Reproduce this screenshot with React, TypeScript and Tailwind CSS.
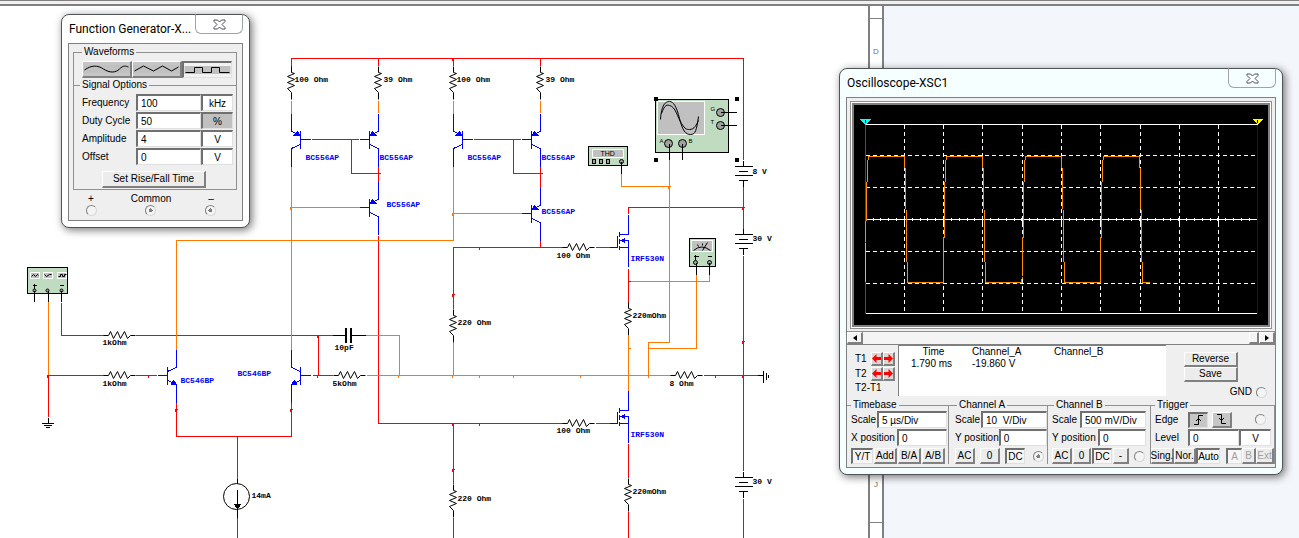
import type { ReactNode } from "react";

const RED = "#ff0000";
const ORANGE = "#ff7800";
const BLUE = "#0000ff";

const redWires =
  "M291 66V58H743V159 M378 58V65 M453 58V65 M540 58V65 " +
  "M311 139H358 M351 139V173H378 M378 166V181 M378 235V423H562 " +
  "M473 139H520 M513 139V173H540 M540 166V187 M540 240V247 " +
  "M453 308V247H562 M595 247H609 M628 213V207H743 M743 186V228 M743 255V470 M743 498V540 " +
  "M628 268V302 M595 423H609 M628 443V477 M628 511V540 M453 423V483 M453 517V540 " +
  "M61 302V335H103 M135 335H332 M318 335V375 M312 375H332 " +
  "M48 375H103 M135 375H156 M48 375V416 M176 402V436H291V402 M237 436V478 M237 517V540 M703 375H757";

const orangeWires =
  "M291 100V113 M378 100V112 M453 100V113 M540 100V112 " +
  "M291 166V349 M291 207H359 M453 166V240H176V349 M453 213H521 " +
  "M621 173V186H669 M669 159V342H648V375 M696 274V348H648 M709 274V281H628 " +
  "M628 335V390 M453 342V375 M366 375H670 M365 335H399V375 M48 301V375";

const redDots = [
  [378, 58], [452, 58], [540, 58], [378, 173], [540, 173], [479, 247], [628, 207], [742, 207],
  [628, 281], [452, 294], [742, 341], [742, 375], [715, 375], [452, 423], [479, 423], [452, 469],
  [317, 335], [317, 375], [148, 375], [47, 375], [175, 409], [290, 409], [237, 436],
];
const orangeDots = [
  [290, 207], [452, 213], [668, 186], [628, 348], [648, 348], [648, 375], [398, 375],
  [452, 375], [479, 375], [513, 375], [580, 375],
];

const labels: [string, number, number][] = [
  ["100 Ohm", 294, 81], ["39 Ohm", 383, 81], ["100 Ohm", 456, 81], ["39 Ohm", 545, 81],
  ["100 Ohm", 556, 257], ["220mOhm", 632, 317], ["220 Ohm", 457, 324], ["100 Ohm", 556, 432],
  ["220mOhm", 632, 493], ["220 Ohm", 457, 500], ["8 Ohm", 669, 385], ["10pF", 334, 349],
  ["5kOhm", 332, 385], ["1kOhm", 102, 344], ["1kOhm", 102, 385], ["14mA", 251, 497],
  ["8 V", 752, 173], ["30 V", 752, 240], ["30 V", 752, 483],
];
const partLabels: [string, number, number][] = [
  ["BC556AP", 305, 159], ["BC556AP", 379, 159], ["BC556AP", 467, 159], ["BC556AP", 541, 159],
  ["BC556AP", 386, 206], ["BC556AP", 541, 213], ["IRF530N", 630, 260], ["IRF530N", 630, 436],
  ["BC546BP", 180, 382], ["BC546BP", 237, 375],
];

function Dots({ points, color }: { points: number[][]; color: string }) {
  return (
    <g stroke={color}>
      {points.map(([x, y]) => (
        <path key={`${x}-${y}`} d={`M${x - 1} ${y}h3M${x} ${y - 1}v3`} />
      ))}
    </g>
  );
}

function Resistor({ x, y, across = false }: { x: number; y: number; across?: boolean }) {
  return (
    <path
      d={
        across
          ? `M${x} ${y}h5l2-4 3 7 4-7 3 7 4-7 3 7 3-3h5`
          : `M${x} ${y}v6l3 1-7 3 7 3-7 3 7 3-7 3 4 4v7`
      }
      stroke="#000"
      shapeRendering="auto"
    />
  );
}

function Transistor({ x, y, flip = false, npn = false }: { x: number; y: number; flip?: boolean; npn?: boolean }) {
  return (
    <g transform={`translate(${x} ${y}) scale(${flip ? -1 : 1} 1)`} stroke={BLUE}>
      <path d="M0-26V-8L9-4M9 5L0 9V27M9-9V9M9 0H19" />
      <path d={npn ? "M0 9l3-4 2 4z" : "M8-4l-6 0 4-4z"} fill={BLUE} />
    </g>
  );
}

function Mosfet({ y }: { y: number }) {
  return (
    <g transform={`translate(628 ${y})`} stroke={BLUE}>
      <path d="M0-33V-13H-9M-9-16V-11M-9-9V-4M-9-2V2M-11-12V0H-19M0 0H-9M0 19V-7H-9" />
      <path d="M-7-7l3-2v4z" fill={BLUE} />
    </g>
  );
}

function Battery({ y }: { y: number }) {
  return <path d={`M743 ${y}v6M734 ${y + 6}h18M738 ${y + 11}h9M734 ${y + 15}h18M738 ${y + 20}h9M743 ${y + 20}v6`} stroke="#000" />;
}

function Instruments() {
  return (
    <g stroke="#000">
      <g fill="#c0dcc0">
        <path d="M655 99h73v53h-73zM588 146h39v19h-39zM689 238h26v28h-26zM27 267h40v26h-40z" />
      </g>
      <g fill="#c0c0c0" stroke="#fff">
        <path d="M657 101h47v33h-47zM592 149h31v8h-31zM691 240h21v11h-21zM30 272h9v6h-9zM43 272h9v6h-9zM57 272h9v6h-9z" />
      </g>
      <g fill="#000" stroke="none">
        <path d="M653 96h4v4h-4zM734 96h4v4h-4zM653 157h4v4h-4zM734 157h4v4h-4z" />
      </g>
      <g shapeRendering="auto">
        <path d="M660 119C661 104 665 101 669 101S676 106 679 118 685 134 690 134 696 130 698 116M661 113C664 104 667 104 669 105 675 106 677 117 681 123S686 129 689 129C694 129 696 124 698 120" />
        <g fill="#a0a0a0">
          <circle cx="720" cy="112" r="4" />
          <circle cx="720" cy="125" r="4" />
          <circle cx="668" cy="143" r="4" />
          <circle cx="682" cy="143" r="4" />
          <circle cx="621" cy="161" r="2" />
          <circle cx="695" cy="262" r="2" />
          <circle cx="709" cy="262" r="2" />
          <circle cx="34" cy="290" r="1.500" />
          <circle cx="47" cy="290" r="1.500" />
          <circle cx="61" cy="290" r="1.500" />
        </g>
        <path d="M693 250q8-7 17 0M702 250l5-8M697 244l1 2M702 243v2" />
        <path d="M31 276l2-2 2 2 2-2 1 1M44 274l2 2 3-2 2 0M58 276h2v-2h2v2h2v-2h2" />
      </g>
      <path d="M720 112h16M720 125h16M669 143v16M682 143v16M621 161v12M696 262v12M709 262v12M34 290v11M48 290v11M61 290v11" />
      <path d="M592 159h3v4h-3zM599 159h3v4h-3zM606 159h3v4h-3z" fill="#a0a0a0" />
      <path d="M693 256h5M695 254v5M707 256h4M32 285h4M34 283v5M59 285h4" />
      <g fill="#000" stroke="none" className="font-['Liberation_Sans',sans-serif] text-[6px]">
        <text x="710" y="110">G</text>
        <text x="710" y="123">T</text>
        <text x="659" y="142">A</text>
        <text x="688" y="142">B</text>
        <text x="600" y="155" className="text-[7px]">THD</text>
      </g>
    </g>
  );
}

function Schematic() {
  return (
    <svg className="block h-full w-full" fill="none" role="img" aria-label="Amplifier schematic">
      <g transform="translate(.5 .5)" shapeRendering="crispEdges">
        <path d={redWires} stroke={RED} />
        <path d={orangeWires} stroke={ORANGE} />
        <Dots points={redDots} color={RED} />
        <Dots points={orangeDots} color={ORANGE} />

        {[291, 378, 453, 540].map((x) => (
          <Resistor key={x} x={x} y={66} />
        ))}
        <Resistor x={628} y={302} />
        <Resistor x={628} y={478} />
        <Resistor x={453} y={309} />
        <Resistor x={453} y={484} />
        <Resistor x={562} y={247} across />
        <Resistor x={562} y={423} across />
        <Resistor x={103} y={335} across />
        <Resistor x={103} y={375} across />
        <Resistor x={333} y={375} across />
        <Resistor x={670} y={375} across />

        <Transistor x={291} y={139} />
        <Transistor x={378} y={139} flip />
        <Transistor x={453} y={139} />
        <Transistor x={540} y={139} flip />
        <Transistor x={378} y={207} flip />
        <Transistor x={540} y={213} flip />
        <Transistor x={176} y={375} flip npn />
        <Transistor x={291} y={375} npn />
        <Mosfet y={247} />
        <Mosfet y={423} />

        <Battery y={160} />
        <Battery y={228} />
        <Battery y={471} />

        {/* capacitor, current source and grounds */}
        <g stroke="#000">
          <path d="M332 335H345M351 335H365" />
          <path d="M345 328h1v14h-1zM350 328h1v14h-1z" fill="#000" />
          <circle cx="236" cy="496" r="13" shapeRendering="auto" />
          <path d="M237 478V483M237 489V517" />
          <path d="M234 504h6l-3 4z" fill="#000" />
          <path d="M48 417V423M41 423H53M43 425H51M45 427H49" />
          <path d="M757 375H763M763 370V382M766 372V379M768 374V377" />
        </g>

        <Instruments />

        <g className="font-['Liberation_Mono',monospace] text-[8px] font-bold">
          <g fill="#000">
            {labels.map(([t, x, y]) => (
              <text key={`${x}-${y}`} x={x} y={y}>{t}</text>
            ))}
          </g>
          <g fill={BLUE}>
            {partLabels.map(([t, x, y]) => (
              <text key={`${x}-${y}`} x={x} y={y}>{t}</text>
            ))}
          </g>
        </g>
      </g>
    </svg>
  );
}

function ToolWindow({ title, className, children }: { title: string; className: string; children: ReactNode }) {
  return (
    <section
      className={`absolute rounded-lg border border-[#505458] px-1.5 pb-1.5 shadow-[2px_2px_8px_rgba(0,0,0,0.55)] ${className}`}
    >
      <header className="flex h-7 items-start justify-between pl-px">
        <h2 className="pt-1 font-['Roboto',sans-serif] text-[12px] leading-5 whitespace-nowrap text-black">{title}</h2>
        <button
          type="button"
          aria-label="Close"
          className="-mt-px flex h-5 w-12 shrink-0 items-center justify-center rounded-b-md border border-[#a0a4a8] border-t-[#505458]"
        >
          <svg width="13" height="11" viewBox="0 0 13 11" fill="#fff" stroke="#4a4d60">
            <path d="M1 1H4.500L6.500 3 8.500 1H12V2.500L9 5.500 12 8.500V10H8.500L6.500 8 4.500 10H1V8.500L4 5.500 1 2.500z" />
          </svg>
        </button>
      </header>
      <div className="border border-[#808080] bg-[#efefef]">{children}</div>
    </section>
  );
}

const sunken = "border-t-2 border-l-2 border-r border-b border-t-[#707070] border-l-[#707070] border-r-[#e0e0e0] border-b-[#e0e0e0]";
const raised = "border-t border-l border-r-2 border-b-2 border-t-white border-l-white border-r-[#808080] border-b-[#808080]";

function Field({ label, value, className = "" }: { label: string; value: string; className?: string }) {
  return <input aria-label={label} defaultValue={value} className={`h-[17px] min-w-0 bg-white ${sunken} ${className}`} />;
}

function Push({ children, on = false, className = "" }: { children: ReactNode; on?: boolean; className?: string }) {
  return (
    <button
      type="button"
      className={`flex h-4 shrink-0 items-center justify-center whitespace-nowrap ${on ? `bg-[#f6f6f6] ${sunken}` : `bg-[#ececec] ${raised}`} ${className}`}
    >
      {children}
    </button>
  );
}

function Terminal({ label, on = false }: { label: string; on?: boolean }) {
  return (
    <input
      type="radio"
      aria-label={label}
      defaultChecked={on}
      className="block size-[11px] appearance-none rounded-full border border-t-[#808080] border-r-[#d8d8d8] border-b-[#d8d8d8] border-l-[#808080] bg-[#f4f4f4] checked:bg-[radial-gradient(circle,#808080_2px,transparent_2px)]"
    />
  );
}

function WaveButton({ label, d, on = false }: { label: string; d: string; on?: boolean }) {
  return (
    <button type="button" aria-label={label} className={`h-[17px] flex-1 ${on ? `bg-[#f2f2f2] ${sunken}` : `bg-[#c6c6c6] ${raised}`}`}>
      <svg className="block h-full w-full" viewBox="0 0 46 14" fill="none" stroke="#000">
        <path d="M0 3h46v8H0z" fill="#c0c0c0" stroke="none" />
        <path d={d} />
      </svg>
    </button>
  );
}

const options = [
  ["Frequency", "100", "kHz"],
  ["Duty Cycle", "50", "%"],
  ["Amplitude", "4", "V"],
  ["Offset", "0", "V"],
];

function FunctionGenerator() {
  return (
    <ToolWindow title="Function Generator-X..." className="top-3.5 left-[61px] w-[189px] bg-white">
      <div className="pt-0.5 pr-[5px] pb-1 pl-1">
        <fieldset className="min-w-0 border border-b-0 border-[#909090] px-1 pb-2">
          <legend className="ml-1 px-0.5 leading-3">Waveforms</legend>
          <div className="mt-[3px] flex pl-1">
            <WaveButton label="Sine" d="M1 8C8 3 14 3 20 7S32 11 36 7 42 4 45 5" />
            <WaveButton label="Triangle" d="M1 9L10 4 20 9 29 4 38 9 45 5" />
            <WaveButton label="Square" on d="M1 9.500H10V4.500H18V9.500H27V4.500H35V9.500H45" />
          </div>
        </fieldset>
        <fieldset className="-mt-[7px] min-w-0 border border-[#909090] pr-[3px] pb-px pl-2">
          <legend className="-ml-0.5 px-0.5 leading-3">Signal Options</legend>
          <div className="mt-[3px] flex flex-col gap-px">
            {options.map(([name, value, unit]) => (
              <div key={name} className="flex items-center">
                <label className="w-[54px] shrink-0 whitespace-nowrap" htmlFor={name}>{name}</label>
                <input id={name} defaultValue={value} className={`h-[17px] w-0 flex-1 bg-white pl-[3px] ${sunken}`} />
                <input
                  aria-label={`${name} unit`}
                  defaultValue={unit}
                  className={`h-[17px] w-8 shrink-0 text-center ${unit === "%" ? "bg-[#c0c0c0]" : "bg-white"} ${sunken}`}
                />
              </div>
            ))}
          </div>
          <Push className="mt-1.5 ml-5 h-[17px] w-[104px]">Set Rise/Fall Time</Push>
        </fieldset>
        <div className="mt-[3px] flex justify-between pr-5 pl-3">
          <div className="flex w-3 flex-col items-center leading-3">+<Terminal label="+" /></div>
          <div className="flex flex-col items-center leading-3">Common<Terminal label="Common" on /></div>
          <div className="flex w-3 flex-col items-center leading-3">–<Terminal label="–" on /></div>
        </div>
      </div>
    </ToolWindow>
  );
}

const columns = [39, 78, 117, 157, 196, 235, 275, 314, 353];
const rows = [31, 63, 95, 127, 159];
const trace = [0, 78, 157, 235]
  .map((x, i) => {
    const end = i === 3 ? x + 49 : x + 78;
    return `${i ? "L" : "M"}${x} ${i ? 152 : 118}L${x + 1} 76 ${x + 2} 40 ${x + 3} 32H${x + 39}L${x + 40} 54 ${x + 41} 115 ${x + 42} 158H${end}`;
  })
  .join("");

function ScopeScreen() {
  return (
    <div className="mx-[3px] mt-[3px] mb-0.5 border border-[#909090] bg-white p-px">
      <div className="border-2 border-[#808080] bg-black">
        <svg className="block h-[220px] w-full" viewBox="0 0 414 220" fill="none" role="img" aria-label="Channel A trace">
          <g transform="translate(11.500 19.500)" shapeRendering="crispEdges">
            <g stroke="#fff">
              <path d="M0 0H392M0 189H392M0 95H392" />
              <g strokeDasharray="4 3">
                {columns.map((x) => (
                  <path key={x} d={`M${x} 0V189`} />
                ))}
                {rows.map((y) => (
                  <path key={y} d={`M0 ${y}H392`} />
                ))}
              </g>
              <path d="M7 95H392" strokeWidth="3" strokeDasharray="1 6.840" />
              {columns.map((x) => (
                <path key={x} d={`M${x} 92V98`} />
              ))}
            </g>
            <path d="M0 0V189" stroke="#f00" />
            <path d="M392 0V189" stroke="#00f" />
            <path d="M0 118V157" stroke="#c8a0ff" />
            <path d={trace} stroke="#ff8c00" />
            <path d="M-7-6H6L0 0z" fill="#0ff" />
            <path d="M386-6H398L392 0z" fill="#ff0" />
            <path d="M0-5V-2M392-5V-2" stroke="#000" />
          </g>
        </svg>
      </div>
    </div>
  );
}

function Group({ title, className, children }: { title: string; className: string; children: ReactNode }) {
  return (
    <fieldset className={`flex min-w-0 flex-col border border-b-0 border-l-0 border-[#909090] ${className}`}>
      <legend className="ml-1 px-0.5 leading-3">{title}</legend>
      <div className="flex flex-col gap-px">{children}</div>
    </fieldset>
  );
}

function Arrow({ right = false }: { right?: boolean }) {
  return (
    <button type="button" aria-label={right ? "Next" : "Previous"} className={`flex h-[14px] w-3 items-center justify-center bg-[#d8d8d8] ${raised}`}>
      <svg width="9" height="9" viewBox="0 0 9 9" fill="#f00" className="shrink-0">
        <path d={right ? "M9 4.500L4.500 0v3H0v3h4.500v3z" : "M0 4.500L4.500 0v3h4.500v3H4.500v3z"} />
      </svg>
    </button>
  );
}

function Scroller() {
  return (
    <div className="flex h-[13px] items-stretch justify-between border-t border-[#909090] bg-[#f4f4f4]">
      <button type="button" aria-label="Scroll left" className={`flex w-4 items-center justify-center ${raised}`}>
        <svg width="4" height="6" viewBox="0 0 4 6"><path d="M4 0v6L0 3z" /></svg>
      </button>
      <div className="flex">
        <span className={`w-2.5 ${raised}`} />
        <button type="button" aria-label="Scroll right" className={`flex w-4 items-center justify-center ${raised}`}>
          <svg width="4" height="6" viewBox="0 0 4 6"><path d="M0 0v6l4-3z" /></svg>
        </button>
      </div>
    </div>
  );
}

function Oscilloscope() {
  return (
    <ToolWindow title="Oscilloscope-XSC1" className="top-[68px] left-[839px] w-[444px] bg-[#f6ffff]">
      <ScopeScreen />
      <Scroller />
      <div className="flex border-t border-[#808080]">
        <div className="flex w-[51px] shrink-0 flex-col gap-px pt-[7px] pl-2">
          {["T1", "T2"].map((t) => (
            <div key={t} className="flex h-[14px] items-center">
              <span className="w-4 shrink-0">{t}</span>
              <Arrow />
              <Arrow right />
            </div>
          ))}
          <span className="leading-3">T2-T1</span>
        </div>
        <div className="h-[51px] w-[268px] shrink-0 border-t border-l border-[#808080] bg-white">
          <table className="text-left leading-3">
            <thead>
              <tr>
                <th className="w-[73px] pr-1 text-center font-normal">Time</th>
                <th className="w-[82px] font-normal">Channel_A</th>
                <th className="font-normal">Channel_B</th>
              </tr>
            </thead>
            <tbody>
              <tr>
                <td className="pr-2 text-center">1.790 ms</td>
                <td>-19.860 V</td>
                <td />
              </tr>
            </tbody>
          </table>
        </div>
        <div className="flex flex-1 flex-col pt-[7px] pr-2">
          <Push className="ml-[18px] h-[15px] w-[54px]">Reverse</Push>
          <Push className="ml-[18px] h-[15px] w-[54px]">Save</Push>
          <div className="mt-[3px] flex items-center justify-end gap-1">GND<Terminal label="GND" /></div>
        </div>
      </div>
      <div className="flex items-start pb-[3px]">
        <Group title="Timebase" className="w-[102px]">
          <div className="flex items-center pr-px pl-1"><span className="flex-1">Scale</span><Field label="Timebase scale" value="5 µs/Div" className="w-[70px] pl-[3px]" /></div>
          <div className="flex items-center pr-px pl-1"><span className="flex-1">X position</span><Field label="X position" value="0" className="w-[50px] pl-[3px]" /></div>
          <div className="flex gap-px pt-px pl-1">
            <Push on className="w-[22px]">Y/T</Push>
            <Push className="w-[23px]">Add</Push>
            <Push className="w-[23px]">B/A</Push>
            <Push className="w-[23px]">A/B</Push>
          </div>
        </Group>
        <Group title="Channel A" className="w-[99px] pl-1">
          <div className="flex items-center"><span className="flex-1 pl-0.5">Scale</span><Field label="Channel A scale" value="10  V/Div" className="w-[66px] pl-[3px]" /></div>
          <div className="flex items-center"><span className="flex-1 pl-0.5 whitespace-nowrap">Y position</span><Field label="Channel A Y position" value="0" className="w-[49px] pl-[3px]" /></div>
          <div className="flex items-center gap-[5px] pt-px pl-0.5">
            <Push className="w-5">AC</Push>
            <Push className="w-5">0</Push>
            <Push on className="w-5">DC</Push>
            <span className="pl-[3px]"><Terminal label="Channel A" on /></span>
          </div>
        </Group>
        <Group title="Channel B" className="w-[103px] pl-0.5">
          <div className="flex items-center pr-1"><span className="flex-1 pl-0.5">Scale</span><Field label="Channel B scale" value="500 mV/Div" className="w-[66px] pl-[3px]" /></div>
          <div className="flex items-center pr-1"><span className="flex-1 pl-0.5 whitespace-nowrap">Y position</span><Field label="Channel B Y position" value="0" className="w-[48px] pl-[3px]" /></div>
          <div className="flex items-center gap-px pt-px pl-0.5">
            <Push className="w-5">AC</Push>
            <Push className="w-[18px]">0</Push>
            <Push on className="w-5">DC</Push>
            <Push className="w-4">-</Push>
            <span className="pl-1"><Terminal label="Channel B" /></span>
          </div>
        </Group>
        <Group title="Trigger" className="flex-1">
          <div className="flex h-[17px] items-center pr-2 pl-1">
            <span className="w-[33px]">Edge</span>
            <button type="button" aria-label="Rising edge" className={`flex h-4 w-5 items-center justify-center bg-[#c6c6c6] ${sunken}`}>
              <svg width="10" height="10" viewBox="0 0 10 10" fill="none" stroke="#000"><path d="M0 9.500H4.500V.5H9M2 6L4.500 3.500 7 6" /></svg>
            </button>
            <button type="button" aria-label="Falling edge" className={`ml-1 flex h-4 w-5 items-center justify-center bg-[#c6c6c6] ${raised}`}>
              <svg width="10" height="10" viewBox="0 0 10 10" fill="none" stroke="#000"><path d="M0 .5H4.500V9.500H9M2 4L4.500 6.500 7 4" /></svg>
            </button>
            <span className="ml-auto"><Terminal label="External trigger" /></span>
          </div>
          <div className="flex items-center pr-[3px] pl-1">
            <span className="w-[33px]">Level</span>
            <Field label="Level" value="0" className="w-0 flex-1 pl-[3px]" />
            <Field label="Level unit" value="V" className="w-8 text-center" />
          </div>
          <div className="flex pt-px">
            <Push className="w-[23px]">Sing.</Push>
            <Push className="w-[22px]">Nor.</Push>
            <Push on className="w-6">Auto</Push>
            <span className="flex-1" />
            <Push on className="w-4 text-[#a0a0a0]">A</Push>
            <Push className="w-[14px] text-[#a0a0a0]">B</Push>
            <Push className="w-[18px] text-[#a0a0a0]">Ext</Push>
          </div>
        </Group>
      </div>
    </ToolWindow>
  );
}

export default function App() {
  return (
    <main className="relative flex h-screen flex-col overflow-hidden bg-white font-['Liberation_Sans',Arial,sans-serif] text-[10px] leading-[14px] text-black">
      <div className="h-1.5 shrink-0 border-t border-b-2 border-[#808080] bg-[#f0f0f0]" />
      <div className="-mt-1.5 flex min-h-0 flex-1">
        <div className="w-[868px] shrink-0">
          <Schematic />
        </div>
        <div className="mt-1.5 flex w-4 shrink-0 flex-col justify-between border-x-2 border-[#808080] bg-white text-center text-[8px] text-[#707070]">
          <div className="border-b border-[#808080] pt-3" />
          <span className="pt-[26px]">D</span>
          <span className="flex-1" />
          <span className="pb-[30px]">J</span>
          <div className="h-4 border-t border-[#808080]" />
        </div>
        <div className="mt-1.5 flex-1 bg-[#f3f6fb]" />
      </div>
      <FunctionGenerator />
      <Oscilloscope />
    </main>
  );
}
